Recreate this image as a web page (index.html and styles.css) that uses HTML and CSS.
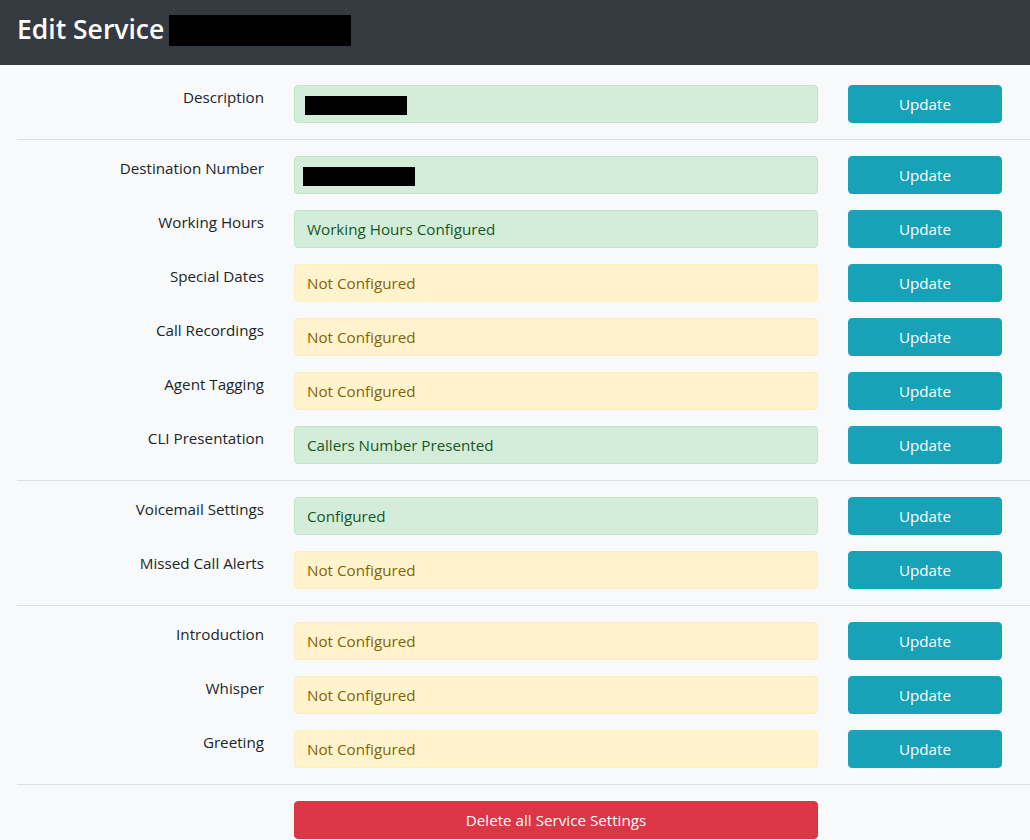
FILE: index.html
```html
<!DOCTYPE html>
<html lang="en">
<head>
<meta charset="utf-8">
<title>Edit Service</title>
<link rel="stylesheet" href="styles.css">
</head>
<body>
<header class="page-header">
  <h1 class="page-title">Edit Service</h1>
  <span class="redact redact-title"></span>
</header>
<main class="page-body">
  <section class="group">
    <div class="row"><label class="label">Description</label><div class="field ok"><span class="redact redact-desc"></span></div><button class="btn btn-update">Update</button></div>
  </section>
  <hr class="divider">
  <section class="group">
    <div class="row"><label class="label">Destination Number</label><div class="field ok"><span class="redact redact-dest"></span></div><button class="btn btn-update">Update</button></div>
    <div class="row"><label class="label">Working Hours</label><div class="field ok">Working Hours Configured</div><button class="btn btn-update">Update</button></div>
    <div class="row"><label class="label">Special Dates</label><div class="field warn">Not Configured</div><button class="btn btn-update">Update</button></div>
    <div class="row"><label class="label">Call Recordings</label><div class="field warn">Not Configured</div><button class="btn btn-update">Update</button></div>
    <div class="row"><label class="label">Agent Tagging</label><div class="field warn">Not Configured</div><button class="btn btn-update">Update</button></div>
    <div class="row"><label class="label">CLI Presentation</label><div class="field ok">Callers Number Presented</div><button class="btn btn-update">Update</button></div>
  </section>
  <hr class="divider">
  <section class="group">
    <div class="row"><label class="label">Voicemail Settings</label><div class="field ok">Configured</div><button class="btn btn-update">Update</button></div>
    <div class="row"><label class="label">Missed Call Alerts</label><div class="field warn">Not Configured</div><button class="btn btn-update">Update</button></div>
  </section>
  <hr class="divider">
  <section class="group">
    <div class="row"><label class="label">Introduction</label><div class="field warn">Not Configured</div><button class="btn btn-update">Update</button></div>
    <div class="row"><label class="label">Whisper</label><div class="field warn">Not Configured</div><button class="btn btn-update">Update</button></div>
    <div class="row"><label class="label">Greeting</label><div class="field warn">Not Configured</div><button class="btn btn-update">Update</button></div>
  </section>
  <hr class="divider">
  <div class="row row-delete"><button class="btn btn-delete">Delete all Service Settings</button></div>
</main>
</body>
</html>
```

FILE: styles.css
```css
* { box-sizing: border-box; }
html, body { margin: 0; height: 840px; overflow: hidden; }
body {
  background: #f8f9fa;
  color: #212529;
  font-family: "Open Sans", "Noto Sans", "Liberation Sans", sans-serif;
  font-size: 15.2px;
  line-height: 24px;
}
.page-header {
  height: 65px;
  background: #343a40;
  color: #fff;
  display: flex;
  align-items: flex-start;
  padding: 13px 0 0 16px;
}
.page-title { margin: 0 0 0 1px; font-size: 26.5px; font-weight: 600; line-height: 32px; }
.redact { display: block; background: #000; height: 19px; }
.redact-title { width: 182px; height: 31px; margin: 2px 0 0 5px; }
.redact-desc { width: 102px; margin: 2px 0 0 -2px; }
.redact-dest { width: 112px; margin: 2px 0 0 -4px; }
.page-body { padding: 20px 0 0 17px; }
.group { display: flex; flex-direction: column; gap: 16px; }
.row {
  display: grid;
  grid-template-columns: 247px 524px 154px;
  column-gap: 30px;
}
.label { text-align: right; line-height: 24px; }
.field {
  height: 38px;
  border: 1px solid;
  border-radius: 4px;
  padding: 0 12px;
  display: flex;
  align-items: center;
}
.ok { background: #d4edda; border-color: #c3e6cb; color: #155724; }
.warn { background: #fff3cd; border-color: #ffeeba; color: #856404; }
.btn {
  height: 38px;
  border: 1px solid;
  border-radius: 4px;
  color: #fff;
  font: inherit;
  padding: 0;
}
.btn-update { background: #17a2b8; border-color: #17a2b8; }
.btn-delete { background: #dc3545; border-color: #dc3545; grid-column: 2; }
.divider {
  border: 0;
  border-top: 1px solid rgba(0, 0, 0, .1);
  margin: 16px 0;
}
```
